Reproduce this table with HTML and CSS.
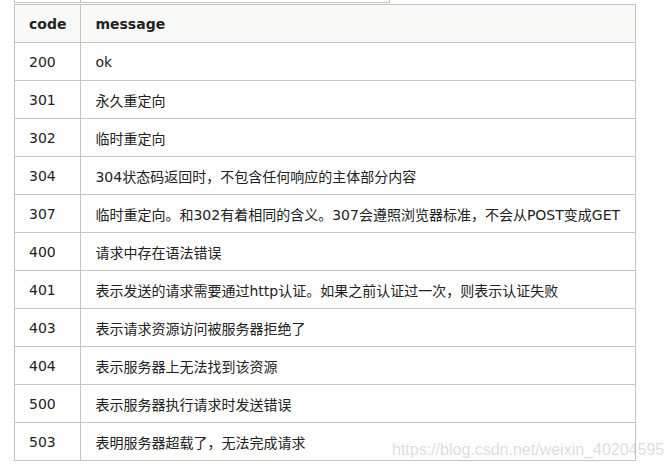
FILE: index.html
```html
<!DOCTYPE html>
<html>
<head>
  <title>HTTP status codes</title>
  <link rel="stylesheet" href="styles.css">
</head>
<body>
  <div class="page">
    <div class="prev-table">
      <div class="prev-cell code-col"></div>
      <div class="prev-cell wide"></div>
    </div>

    <table class="codes">
      <thead>
        <tr>
          <th class="code-col">code</th>
          <th>message</th>
        </tr>
      </thead>
      <tbody>
        <tr><td>200</td><td>ok</td></tr>
        <tr><td>301</td><td>永久重定向</td></tr>
        <tr><td>302</td><td>临时重定向</td></tr>
        <tr><td>304</td><td>304状态码返回时，不包含任何响应的主体部分内容</td></tr>
        <tr><td>307</td><td>临时重定向。和302有着相同的含义。307会遵照浏览器标准，不会从POST变成GET</td></tr>
        <tr><td>400</td><td>请求中存在语法错误</td></tr>
        <tr><td>401</td><td>表示发送的请求需要通过http认证。如果之前认证过一次，则表示认证失败</td></tr>
        <tr><td>403</td><td>表示请求资源访问被服务器拒绝了</td></tr>
        <tr><td>404</td><td>表示服务器上无法找到该资源</td></tr>
        <tr><td>500</td><td>表示服务器执行请求时发送错误</td></tr>
        <tr><td>503</td><td>表明服务器超载了，无法完成请求</td></tr>
      </tbody>
    </table>

    <span class="watermark">https://blog.csdn.net/weixin_40204595</span>
  </div>
</body>
</html>
```

FILE: styles.css
```css
body {
  margin: 0;
  background: #fefefe;
  font-family: "DejaVu Sans", "Noto Sans CJK SC", sans-serif;
  color: #222;
}
.page {
  position: relative;
  padding-left: 14px;
  height: 468px;
}
.prev-table {
  display: flex;
  height: 3px;
}
.prev-cell {
  border-left: 1px solid #c6c3bc;
  border-bottom: 1px solid #c6c3bc;
}
.prev-cell.code-col {
  width: 65px;
}
.prev-cell.wide {
  width: 308px;
  border-right: 1px solid #c6c3bc;
}
.codes {
  border-collapse: collapse;
  width: 622px;
  margin-top: 1px;
  font-size: 14px;
}
.codes th,
.codes td {
  border: 1px solid #c6c3bc;
  height: 38px;
  padding: 0 14px;
  text-align: left;
  vertical-align: middle;
  box-sizing: border-box;
}
.codes th {
  background: #f9f9f7;
  font-weight: bold;
}
.codes .code-col {
  width: 65px;
}
.watermark {
  position: absolute;
  left: 392px;
  top: 441px;
  font-family: "Liberation Sans", Arial, sans-serif;
  font-size: 16px;
  color: rgba(180, 180, 180, 0.45);
}
```
